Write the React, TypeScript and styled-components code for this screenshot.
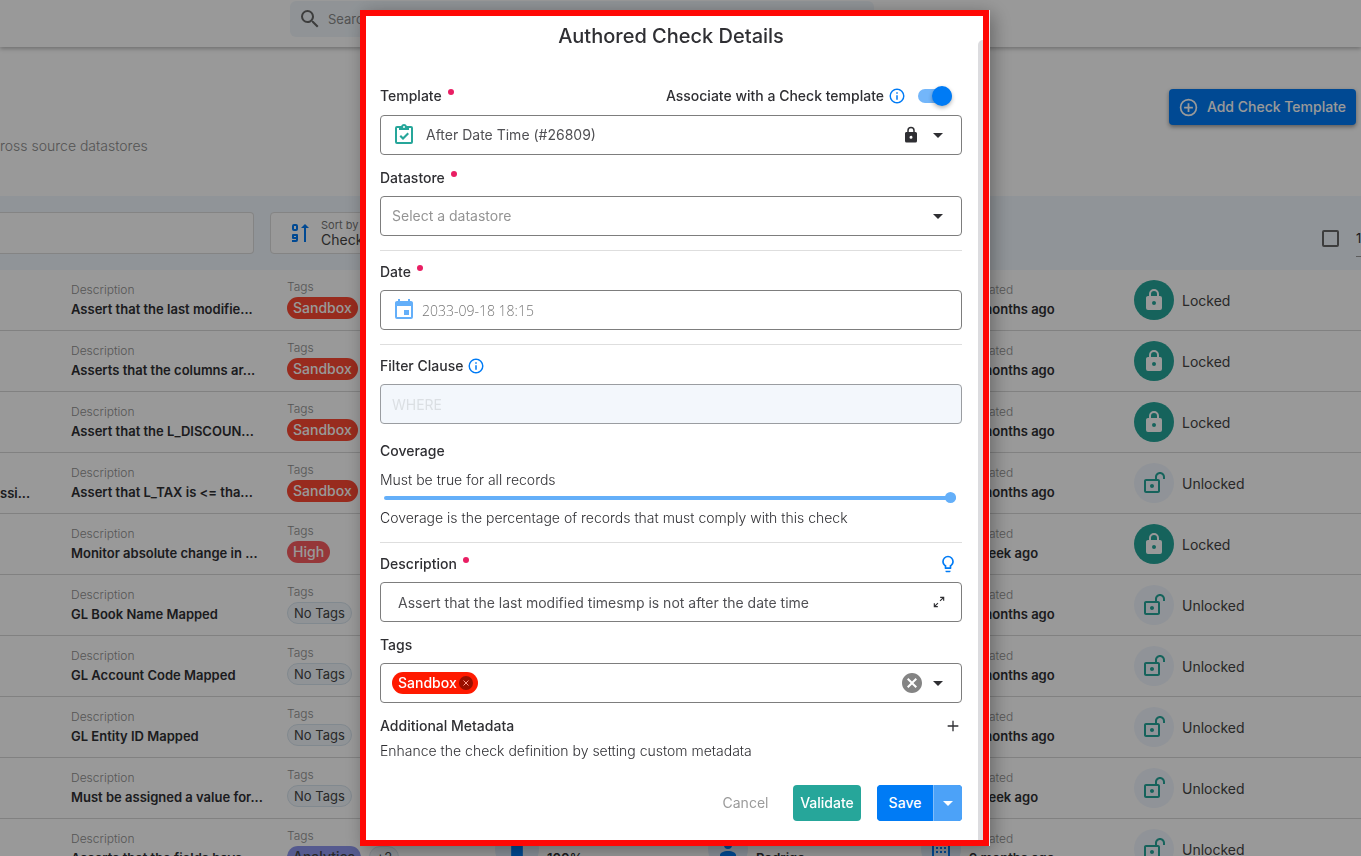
import React, { useState } from 'react';
import styled, { createGlobalStyle, css } from 'styled-components';

const GlobalStyle = createGlobalStyle`
  *, *::before, *::after { box-sizing: border-box; }
  body {
    margin: 0;
    background: #ffffff;
    color: #2f2f33;
    font-family: Inter, "Liberation Sans", sans-serif;
    font-size: 14px;
    line-height: 20px;
  }
  button, input, select { font: inherit; color: inherit; }
  ul { list-style: none; margin: 0; padding: 0; }
`;

const glyphs = {
  search:
    'M9.5,3A6.5,6.5 0 0,1 16,9.5C16,11.11 15.41,12.59 14.44,13.73L14.71,14H15.5L20.5,19L19,20.5L14,15.5V14.71L13.73,14.44C12.59,15.41 11.11,16 9.5,16A6.5,6.5 0 0,1 3,9.5A6.5,6.5 0 0,1 9.5,3M9.5,5C7,5 5,7 5,9.5C5,12 7,14 9.5,14C12,14 14,12 14,9.5C14,7 12,5 9.5,5Z',
  plusCircle:
    'M12,20C7.59,20 4,16.41 4,12C4,7.59 7.59,4 12,4C16.41,4 20,7.59 20,12C20,16.41 16.41,20 12,20M12,2A10,10 0 0,0 2,12A10,10 0 0,0 12,22A10,10 0 0,0 22,12A10,10 0 0,0 12,2M13,7H11V11H7V13H11V17H13V13H17V11H13V7Z',
  lock:
    'M12,17A2,2 0 0,0 14,15C14,13.89 13.1,13 12,13A2,2 0 0,0 10,15A2,2 0 0,0 12,17M18,8A2,2 0 0,1 20,10V20A2,2 0 0,1 18,22H6A2,2 0 0,1 4,20V10C4,8.89 4.9,8 6,8H7V6A5,5 0 0,1 12,1A5,5 0 0,1 17,6V8H18M12,3A3,3 0 0,0 9,6V8H15V6A3,3 0 0,0 12,3Z',
  lockOpen:
    'M18 1C15.24 1 13 3.24 13 6V8H4C2.9 8 2 8.89 2 10V20C2 21.11 2.9 22 4 22H16C17.11 22 18 21.11 18 20V10C18 8.9 17.11 8 16 8H15V6C15 4.34 16.34 3 18 3C19.66 3 21 4.34 21 6V8H23V6C23 3.24 20.76 1 18 1M10 13C8.9 13 8 13.89 8 15C8 16.11 8.9 17 10 17C11.11 17 12 16.11 12 15C12 13.9 11.11 13 10 13M16 10V20H4V10H16Z',
  clipboard:
    'M19,3H14.82C14.4,1.84 13.3,1 12,1C10.7,1 9.6,1.84 9.18,3H5A2,2 0 0,0 3,5V19A2,2 0 0,0 5,21H19A2,2 0 0,0 21,19V5A2,2 0 0,0 19,3M12,3A1,1 0 0,1 13,4A1,1 0 0,1 12,5A1,1 0 0,1 11,4A1,1 0 0,1 12,3M7,7H17V5H19V19H5V5H7V7M7.5,13.5L9,12L11,14L15.5,9.5L17,11L11,17L7.5,13.5Z',
  calendar:
    'M19,19H5V8H19M16,1V3H8V1H6V3H5C3.89,3 3,3.89 3,5V19A2,2 0 0,0 5,21H19A2,2 0 0,0 21,19V5C21,3.89 20.1,3 19,3H18V1M17,12H12V17H17V12Z',
  info:
    'M11,9H13V7H11M12,20C7.59,20 4,16.41 4,12C4,7.59 7.59,4 12,4C16.41,4 20,7.59 20,12C20,16.41 16.41,20 12,20M12,2A10,10 0 0,0 2,12A10,10 0 0,0 12,22A10,10 0 0,0 22,12A10,10 0 0,0 12,2M11,17H13V11H11V17Z',
  bulb:
    'M12,2A7,7 0 0,1 19,9C19,11.38 17.81,13.47 16,14.74V17A1,1 0 0,1 15,18H9A1,1 0 0,1 8,17V14.74C6.19,13.47 5,11.38 5,9A7,7 0 0,1 12,2M9,21V20H15V21A1,1 0 0,1 14,22H10A1,1 0 0,1 9,21M12,4A5,5 0 0,0 7,9C7,11.05 8.23,12.81 10,13.58V16H14V13.58C15.77,12.81 17,11.05 17,9A5,5 0 0,0 12,4Z',
  caret: 'M7,10L12,15L17,10H7Z',
  clear:
    'M12,2C17.53,2 22,6.47 22,12C22,17.53 17.53,22 12,22C6.47,22 2,17.53 2,12C2,6.47 6.47,2 12,2M15.59,7L12,10.59L8.41,7L7,8.41L10.59,12L7,15.59L8.41,17L12,13.41L15.59,17L17,15.59L13.41,12L17,8.41L15.59,7Z',
  expand:
    'M10,21V19H6.41L10.91,14.5L9.5,13.09L5,17.59V14H3V21H10M14.5,10.91L19,6.41V10H21V3H14V5H17.59L13.09,9.5L14.5,10.91Z',
  plus: 'M4,11H11V4H13V11H20V13H13V20H11V13H4V11Z',
  person:
    'M12,4A4,4 0 0,1 16,8A4,4 0 0,1 12,12A4,4 0 0,1 8,8A4,4 0 0,1 12,4M12,14C16.42,14 20,15.79 20,18V20H4V18C4,15.79 7.58,14 12,14Z',
  month:
    'M9,10V12H7V10H9M13,10V12H11V10H13M17,10V12H15V10H17M9,14V16H7V14H9M13,14V16H11V14H13M17,14V16H15V14H17M19,3A2,2 0 0,1 21,5V19A2,2 0 0,1 19,21H5A2,2 0 0,1 3,19V5A2,2 0 0,1 5,3H6V1H8V3H16V1H18V3H19M19,19V8H5V19H19Z',
  bar: 'M7,2H17V22H7Z',
};

type GlyphName = keyof typeof glyphs;

const Svg = styled.svg`
  display: block;
  flex: none;
  fill: currentColor;
`;

function Icon({ name, size = 24 }: { name: GlyphName; size?: number }) {
  return (
    <Svg width={size} height={size} viewBox="0 0 24 24" aria-hidden="true">
      <path fillRule="evenodd" d={glyphs[name]} />
    </Svg>
  );
}

function SortIcon() {
  return (
    <Svg width={20} height={20} viewBox="0 0 20 20" aria-hidden="true">
      <g fill="none" stroke="currentColor" strokeWidth="2" strokeLinejoin="round">
        <rect x="2" y="2" width="4" height="5" rx="1" />
        <path d="M1 18H5Q6 18 6 17V12H2V15H6" />
        <path d="M14 19V3" />
      </g>
      <path d="M10 5L14 1L18 5Z" />
    </Svg>
  );
}

/* ---------- Page ---------- */

const Page = styled.div`
  height: 100vh;
  overflow: hidden;
`;

const TopBar = styled.header`
  display: flex;
  height: 47px;
  padding: 1px 0 10px 290px;
  box-shadow: 0 2px 4px rgba(0, 0, 0, 0.25);
`;

const SearchBox = styled.label`
  display: flex;
  align-items: center;
  gap: 4px;
  width: 584px;
  padding: 0 8px;
  border-radius: 6px;
  background: #f0f6fb;
  color: #666666;
`;

const SearchInput = styled.input`
  flex: 1;
  border: 0;
  background: none;
  outline: 0;
  font-size: 13px;
  &::placeholder { color: #8a8a8a; opacity: 1; }
`;

const Intro = styled.section`
  display: flex;
  justify-content: space-between;
  align-items: flex-start;
  height: 149px;
  padding: 42px 5px 0 0;
`;

const Subtitle = styled.p`
  margin: 47px 0 0;
  color: #8c8c8c;
  font-weight: 300;
`;

const AddButton = styled.button`
  display: flex;
  align-items: center;
  gap: 8px;
  height: 36px;
  padding: 0 10px 0 9px;
  border: 0;
  border-radius: 4px;
  background: #007bf5;
  color: #ffffff;
  font-weight: 500;
  box-shadow: 0 2px 4px rgba(0, 0, 0, 0.4);
`;

const FilterBar = styled.section`
  display: flex;
  align-items: flex-start;
  height: 74px;
  padding-top: 16px;
  background: #f0f7fd;
`;

const FilterInput = styled.input`
  width: 254px;
  height: 42px;
  border: 1px solid #dcdcdc;
  border-left: 0;
  border-radius: 0 4px 4px 0;
  background: #ffffff;
`;

const SortBox = styled.button`
  display: flex;
  align-items: center;
  gap: 10px;
  width: 254px;
  height: 42px;
  margin-left: 16px;
  padding: 0 20px;
  border: 1px solid #dcdcdc;
  border-radius: 4px;
  background: #ffffff;
  color: #007bf5;
  text-align: left;
`;

const SortText = styled.span`
  display: flex;
  flex-direction: column;
  color: #444444;
  line-height: 16px;
  small { font-size: 11px; line-height: 14px; color: #777777; }
`;

const Selection = styled.div`
  display: flex;
  align-items: center;
  gap: 17px;
  height: 45px;
  margin-left: auto;
`;

const SelectAll = styled.input`
  appearance: none;
  width: 17px;
  height: 17px;
  margin: 8px 0 0;
  border: 2px solid #666666;
  border-radius: 2px;
`;

const PageCount = styled.span`
  width: 5px;
  height: 45px;
  overflow: hidden;
  padding-top: 16px;
  border-bottom: 1px solid #999999;
  font-size: 13px;
`;

const Row = styled.li`
  display: grid;
  grid-template-columns: 71px 216px 208px 213px 213px 213px 1fr;
  height: 61px;
  border-bottom: 1px solid #d8d8d8;
`;

const Cell = styled.div`
  display: flex;
  flex-direction: column;
  padding-top: 12px;
  white-space: nowrap;
`;

const Caption = styled.span`
  color: #909090;
  font-size: 12px;
  font-weight: 300;
  line-height: 16px;
`;

const Value = styled.strong`
  font-size: 13px;
  font-weight: 600;
  line-height: 22px;
`;

const NameEnd = styled(Value)`
  padding-top: 29px;
`;

const TagCell = styled(Cell)`
  padding-top: 9px;
  gap: 2px;
`;

const TagLine = styled.div`
  display: flex;
  gap: 8px;
`;

const RowTag = styled.span<{ $bg?: string; $dark?: boolean }>`
  height: 22px;
  padding: 0 6px;
  border: ${p => (p.$bg ? '0' : '1px solid #d8e4ee')};
  border-radius: 11px;
  background: ${p => p.$bg ?? '#f0f6fb'};
  color: ${p => (p.$bg && !p.$dark ? '#ffffff' : '#444444')};
  font-size: ${p => (p.$bg ? 14 : 13)}px;
  font-weight: ${p => (p.$bg ? 500 : 400)};
  line-height: ${p => (p.$bg ? '22px' : '20px')};
`;

const IconCell = styled.div`
  display: flex;
  gap: 8px;
`;

const Disc = styled.span<{ $solid?: boolean; $tone?: string; $wide?: boolean }>`
  display: flex;
  flex: none;
  align-items: center;
  justify-content: center;
  width: ${p => (p.$wide ? 44 : 40)}px;
  height: ${p => (p.$wide ? 44 : 40)}px;
  margin-top: ${p => (p.$wide ? 8 : 10)}px;
  border-radius: 50%;
  background: ${p => (p.$solid ? '#26a69a' : p.$tone ? '#e3effd' : '#f0f6fd')};
  color: ${p => (p.$solid ? '#ffffff' : p.$tone ?? '#26a69a')};
`;

const LockText = styled.span`
  padding-top: 21px;
  color: #444444;
`;

type RowData = {
  description: string;
  tag?: string;
  color?: string;
  dark?: boolean;
  extra?: string;
  created: string;
  locked?: boolean;
  name?: string;
};

const rows: RowData[] = [
  { description: 'Assert that the last modifie...', tag: 'Sandbox', color: '#fd4832', created: '9 months ago', locked: true },
  { description: 'Asserts that the columns ar...', tag: 'Sandbox', color: '#fd4832', created: '9 months ago', locked: true },
  { description: 'Assert that the L_DISCOUN...', tag: 'Sandbox', color: '#fd4832', created: '9 months ago', locked: true },
  { name: 'ssi...', description: 'Assert that L_TAX is <= tha...', tag: 'Sandbox', color: '#fd4832', created: '9 months ago' },
  { description: 'Monitor absolute change in ...', tag: 'High', color: '#f95d60', created: '1 week ago', locked: true },
  { description: 'GL Book Name Mapped', created: '9 months ago' },
  { description: 'GL Account Code Mapped', created: '9 months ago' },
  { description: 'GL Entity ID Mapped', created: '9 months ago' },
  { description: 'Must be assigned a value for...', created: '1 week ago' },
  { description: 'Asserts that the fields have...', tag: 'Analytics', color: '#8e97ee', dark: true, extra: '+2', created: '9 months ago' },
];

function TemplateRow({ row }: { row: RowData }) {
  return (
    <Row>
      <div>{row.name && <NameEnd as="div">{row.name}</NameEnd>}</div>
      <Cell>
        <Caption>Description</Caption>
        <Value>{row.description}</Value>
      </Cell>
      <TagCell>
        <Caption>Tags</Caption>
        <TagLine>
          <RowTag $bg={row.color} $dark={row.dark}>{row.tag ?? 'No Tags'}</RowTag>
          {row.extra && <RowTag>{row.extra}</RowTag>}
        </TagLine>
      </TagCell>
      <IconCell>
        <Disc $tone="#007bf5" $wide><Icon name="bar" size={28} /></Disc>
        <Cell><Caption>Coverage</Caption><Value>100%</Value></Cell>
      </IconCell>
      <IconCell>
        <Disc $tone="#007bf5"><Icon name="person" /></Disc>
        <Cell><Caption>Author</Caption><Value>Rodrigo</Value></Cell>
      </IconCell>
      <IconCell>
        <Disc $tone="#007bf5"><Icon name="month" /></Disc>
        <Cell><Caption>Created</Caption><Value>{row.created}</Value></Cell>
      </IconCell>
      <IconCell>
        <Disc $solid={row.locked}><Icon name={row.locked ? 'lock' : 'lockOpen'} /></Disc>
        <LockText>{row.locked ? 'Locked' : 'Unlocked'}</LockText>
      </IconCell>
    </Row>
  );
}

/* ---------- Dialog ---------- */

const Overlay = styled.div`
  position: fixed;
  inset: 0;
  display: flex;
  justify-content: center;
  padding: 10px 12px 10px 0;
  background: rgba(0, 0, 0, 0.4);
`;

const Dialog = styled.form`
  position: relative;
  width: 629px;
  padding: 6px 21px 14px 14px;
  border: 6px solid #ff0805;
  background: #ffffff;
  box-shadow: 1px 0 0 #eeeeee, 4px 4px 18px rgba(0, 0, 0, 0.35);
`;

const ScrollTrack = styled.div`
  position: absolute;
  top: 24px;
  right: 0;
  bottom: 0;
  width: 5px;
  border-radius: 5px 0 0 0;
  background: #dcdcdf;
`;

const Title = styled.h1`
  margin: 0 0 36px;
  text-align: center;
  font-size: 20px;
  font-weight: 500;
  line-height: 28px;
`;

const FieldGroup = styled.div<{ $top?: number; $gap?: number }>`
  display: flex;
  flex-direction: column;
  gap: ${p => p.$gap ?? 8}px;
  padding-top: ${p => p.$top ?? 13}px;
`;

const Section = styled.section`
  margin-top: 14px;
  border-top: 1px solid #dedede;
`;

const LabelRow = styled.div`
  display: flex;
  align-items: center;
  justify-content: space-between;
  height: 20px;
`;

const LabelGroup = styled.div`
  display: flex;
  align-items: center;
  gap: 4px;
`;

const Label = styled.label<{ $required?: boolean }>`
  display: flex;
  font-weight: 500;
  ${p => p.$required && css`
    &::after {
      content: '';
      width: 6px;
      height: 6px;
      margin: 3px 0 0 6px;
      border-radius: 50%;
      background: #e91e63;
    }
  `}
`;

const Box = styled.div<{ $disabled?: boolean; $gap?: number }>`
  display: flex;
  align-items: center;
  gap: ${p => p.$gap ?? 0}px;
  height: 40px;
  padding: 0 11px;
  border: 1px solid ${p => (p.$disabled ? '#9a9da1' : '#7d7d7d')};
  border-radius: 4px;
  background: ${p => (p.$disabled ? '#f3f7fc' : '#ffffff')};
`;

const controlBase = css`
  flex: 1;
  min-width: 0;
  height: 100%;
  padding: 0;
  border: 0;
  outline: 0;
  background: none;
  color: #505054;
  font-weight: 400;
`;

const Select = styled.select<{ $muted?: boolean; $afterIcon?: boolean }>`
  ${controlBase}
  appearance: none;
  margin-left: ${p => (p.$afterIcon ? 10 : 0)}px;
  color: ${p => (p.$muted ? '#949494' : '#505054')};
`;

const TextInput = styled.input<{ $indent?: boolean }>`
  ${controlBase}
  padding-left: ${p => (p.$indent ? 6 : 0)}px;
  &:disabled::placeholder { color: #dbdfe3; opacity: 1; }
`;

const DateInput = styled(TextInput)`
  font-family: "Open Sans", "Noto Sans", sans-serif;
  font-weight: 300;
  color: #757575;
`;

const IconButton = styled.button<{ $color?: string; $right?: number }>`
  display: flex;
  margin: 0 ${p => p.$right ?? 0}px 0 0;
  padding: 0;
  border: 0;
  background: none;
  color: ${p => p.$color ?? '#2f2f33'};
`;

const Tint = styled.span<{ $color: string }>`
  display: flex;
  color: ${p => p.$color};
`;

const CaretSlot = styled.span`
  display: flex;
  margin-left: 6px;
`;

const CaretButton = styled(IconButton)`
  margin-left: 2px;
`;

const Switch = styled.input`
  appearance: none;
  position: relative;
  width: 34px;
  height: 14px;
  margin: 0 10px 0 8px;
  border-radius: 7px;
  background: #c4c4c4;
  &::after {
    content: '';
    position: absolute;
    top: -3px;
    left: 0;
    width: 20px;
    height: 20px;
    border-radius: 50%;
    background: #ffffff;
    box-shadow: 0 2px 4px rgba(0, 0, 0, 0.3);
  }
  &:checked { background: #73b6fa; }
  &:checked::after { left: 14px; background: #007bf5; }
`;

const Slider = styled.input`
  appearance: none;
  display: block;
  width: 572px;
  max-width: 100%;
  height: 16px;
  margin: 0 0 2px 4px;
  background: none;
  &::-webkit-slider-runnable-track {
    height: 4px;
    border-radius: 2px;
    background: #64aff9;
  }
  &::-webkit-slider-thumb {
    appearance: none;
    width: 11px;
    height: 11px;
    margin-top: -4px;
    border-radius: 50%;
    background: #64aff9;
  }
`;

const Note = styled.p`
  margin: 0;
  font-weight: 300;
`;

const CoverageNote = styled(Note)`
  margin-top: 1px;
`;

const TagChip = styled.span`
  display: flex;
  align-items: center;
  gap: 2px;
  height: 22px;
  margin-right: auto;
  padding: 0 5px 0 6px;
  border-radius: 11px;
  background: #ff1a00;
  color: #ffffff;
  font-weight: 500;
`;

const ChipRemove = styled.button`
  display: flex;
  align-items: center;
  justify-content: center;
  width: 14px;
  height: 14px;
  padding: 0;
  border: 0;
  border-radius: 50%;
  background: #990f00;
`;

const MetadataRow = styled(LabelRow)`
  margin: 13px 0 5px;
`;

const Actions = styled.div`
  display: flex;
  justify-content: flex-end;
  gap: 16px;
  margin-top: 24px;
`;

const ActionButton = styled.button<{ $bg?: string; $width: number }>`
  width: ${p => p.$width}px;
  height: 36px;
  padding: 0;
  border: 0;
  border-radius: 4px;
  background: ${p => p.$bg ?? 'none'};
  color: ${p => (p.$bg ? '#ffffff' : '#9b9b9b')};
  font-weight: ${p => (p.$bg ? 500 : 400)};
`;

const SplitButton = styled.div`
  display: flex;
  overflow: hidden;
  border-radius: 4px;
  background: #007bf5;
`;

const SplitToggle = styled.button`
  display: flex;
  align-items: center;
  justify-content: center;
  width: 29px;
  padding: 0;
  border: 0;
  border-left: 1px solid #80bdfa;
  background: #4ca2f8;
  color: #ffffff;
`;

function CheckDialog() {
  const [linked, setLinked] = useState(true);
  const [coverage, setCoverage] = useState(100);
  return (
    <Dialog role="dialog" aria-labelledby="dialog-title" onSubmit={e => e.preventDefault()}>
      <ScrollTrack />
      <Title id="dialog-title">Authored Check Details</Title>
      <FieldGroup $top={0} $gap={9}>
        <LabelRow>
          <Label htmlFor="template" $required>Template</Label>
          <LabelGroup>
            <Label htmlFor="linked">Associate with a Check template</Label>
            <Tint $color="#007bf5"><Icon name="info" size={18} /></Tint>
            <Switch id="linked" type="checkbox" checked={linked} onChange={e => setLinked(e.target.checked)} />
          </LabelGroup>
        </LabelRow>
        <Box>
          <Tint $color="#26a69a"><Icon name="clipboard" /></Tint>
          <Select id="template" $afterIcon>
            <option>After Date Time (#26809)</option>
          </Select>
          <Icon name="lock" size={18} />
          <CaretSlot><Icon name="caret" /></CaretSlot>
        </Box>
      </FieldGroup>
      <FieldGroup>
        <Label htmlFor="datastore" $required>Datastore</Label>
        <Box>
          <Select id="datastore" $muted>
            <option>Select a datastore</option>
          </Select>
          <CaretSlot><Icon name="caret" /></CaretSlot>
        </Box>
      </FieldGroup>
      <Section>
        <FieldGroup $top={11}>
          <Label htmlFor="date" $required>Date</Label>
          <Box $gap={6}>
            <Tint $color="#64aff9"><Icon name="calendar" /></Tint>
            <DateInput id="date" type="text" defaultValue="2033-09-18 18:15" />
          </Box>
        </FieldGroup>
      </Section>
      <Section>
        <FieldGroup $top={11}>
          <LabelGroup>
            <Label htmlFor="filter">Filter Clause</Label>
            <Tint $color="#007bf5"><Icon name="info" size={18} /></Tint>
          </LabelGroup>
          <Box $disabled>
            <TextInput id="filter" type="text" placeholder="WHERE" disabled />
          </Box>
        </FieldGroup>
        <FieldGroup $top={17}>
          <Label htmlFor="coverage">Coverage</Label>
          <CoverageNote>Must be true for all records</CoverageNote>
        </FieldGroup>
        <Slider id="coverage" type="range" min={0} max={100} value={coverage} onChange={e => setCoverage(Number(e.target.value))} />
        <Note>Coverage is the percentage of records that must comply with this check</Note>
      </Section>
      <Section>
        <FieldGroup $top={11}>
          <LabelRow>
            <Label htmlFor="description" $required>Description</Label>
            <IconButton type="button" $color="#007bf5" $right={4} aria-label="Suggest a description">
              <Icon name="bulb" size={20} />
            </IconButton>
          </LabelRow>
          <Box>
            <TextInput id="description" type="text" $indent defaultValue="Assert that the last modified timesmp is not after the date time" />
            <IconButton type="button" $right={4} aria-label="Expand">
              <Icon name="expand" size={14} />
            </IconButton>
          </Box>
        </FieldGroup>
        <FieldGroup>
          <Label as="div">Tags</Label>
          <Box>
            <TagChip>
              Sandbox
              <ChipRemove type="button" aria-label="Remove Sandbox">
                <svg width="6" height="6" viewBox="0 0 6 6" stroke="#ff9c8f" aria-hidden="true">
                  <path d="M0.5 0.5L5.5 5.5M5.5 0.5L0.5 5.5" />
                </svg>
              </ChipRemove>
            </TagChip>
            <IconButton type="button" $color="#848484" aria-label="Clear tags"><Icon name="clear" /></IconButton>
            <CaretButton type="button" aria-label="Show tags"><Icon name="caret" /></CaretButton>
          </Box>
        </FieldGroup>
      </Section>
      <MetadataRow>
        <Label as="div">Additional Metadata</Label>
        <IconButton type="button" $right={1} aria-label="Add metadata"><Icon name="plus" size={16} /></IconButton>
      </MetadataRow>
      <Note>Enhance the check definition by setting custom metadata</Note>
      <Actions>
        <ActionButton type="button" $width={63}>Cancel</ActionButton>
        <ActionButton type="button" $width={68} $bg="#26a69a">Validate</ActionButton>
        <SplitButton>
          <ActionButton type="submit" $width={56} $bg="#007bf5">Save</ActionButton>
          <SplitToggle type="button" aria-label="More save options"><Icon name="caret" /></SplitToggle>
        </SplitButton>
      </Actions>
    </Dialog>
  );
}

export default function App() {
  return (
    <>
      <GlobalStyle />
      <Page>
        <TopBar>
          <SearchBox>
            <Icon name="search" />
            <SearchInput type="search" placeholder="Search" aria-label="Search" />
          </SearchBox>
        </TopBar>
        <Intro>
          <Subtitle>ross source datastores</Subtitle>
          <AddButton type="button"><Icon name="plusCircle" size={21} />Add Check Template</AddButton>
        </Intro>
        <FilterBar>
          <FilterInput type="text" aria-label="Filter templates" />
          <SortBox type="button">
            <SortIcon />
            <SortText><small>Sort by</small>Check</SortText>
          </SortBox>
          <Selection>
            <SelectAll type="checkbox" aria-label="Select all" />
            <PageCount>1</PageCount>
          </Selection>
        </FilterBar>
        <ul>
          {rows.map((row, i) => <TemplateRow key={i} row={row} />)}
        </ul>
      </Page>
      <Overlay>
        <CheckDialog />
      </Overlay>
    </>
  );
}
